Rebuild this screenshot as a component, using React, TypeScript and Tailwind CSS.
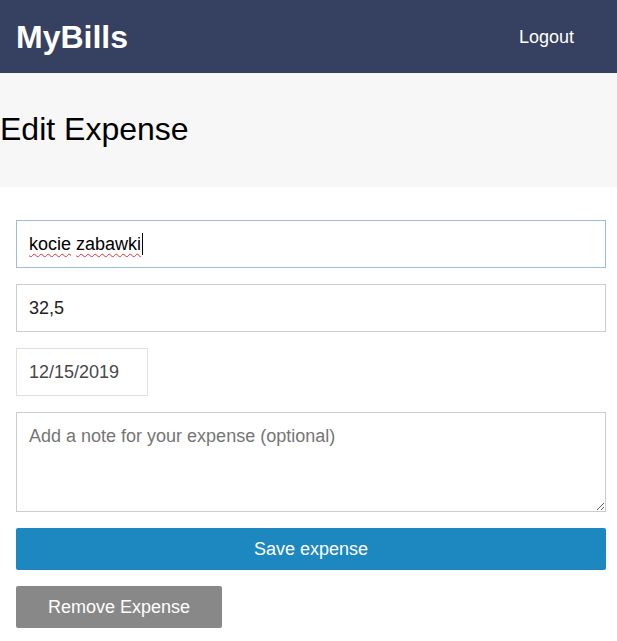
export default function App() {
  const font = "font-['Liberation_Sans',Arial,sans-serif]";

  return (
    <div className={`bg-white ${font}`}>
      {/* Header */}
      <header className="h-[73px] bg-[#364161] flex items-center justify-between pl-4 pr-[43px]">
        <h1 className="text-[32px] font-bold text-white leading-none">MyBills</h1>
        <button className="text-[18px] text-white leading-none">Logout</button>
      </header>

      {/* Page title */}
      <div className="h-[114px] bg-[#f7f7f7] flex items-center">
        <h2 className="text-[32px] text-black leading-none pb-[2px]">Edit Expense</h2>
      </div>

      {/* Form */}
      <form className="flex flex-col items-start gap-4 pl-4 pr-[11px] pt-[33px]">
        <div className="w-full h-[48px] border border-[#9fbbdc] px-3 flex items-center text-[18px] text-black">
          <span className="underline decoration-wavy decoration-[#e03030] decoration-1 underline-offset-[3px]">kocie</span>
          <span>&nbsp;</span>
          <span className="underline decoration-wavy decoration-[#e03030] decoration-1 underline-offset-[3px]">zabawki</span>
          <span className="w-px h-[22px] bg-black ml-px" />
        </div>
        <input
          readOnly
          value="32,5"
          className="w-full h-[48px] border border-[#cacccd] px-3 text-[18px] text-[#222] outline-none"
        />
        <input
          readOnly
          value="12/15/2019"
          className="w-[132px] h-[48px] border border-[#e0e0e0] px-3 text-[18px] text-[#484848] outline-none"
        />
        <textarea
          readOnly
          placeholder="Add a note for your expense (optional)"
          className="w-full h-[100px] border border-[#cacccd] px-3 py-[10px] text-[18px] placeholder:text-[#757575] outline-none"
        />
        <button
          type="button"
          className="w-full h-[42px] bg-[#1c88bf] text-white text-[18px] rounded-[2px]"
        >
          Save expense
        </button>
        <button
          type="button"
          className="w-[206px] h-[42px] bg-[#888888] text-white text-[18px] rounded-[2px]"
        >
          Remove Expense
        </button>
      </form>
    </div>
  );
}
